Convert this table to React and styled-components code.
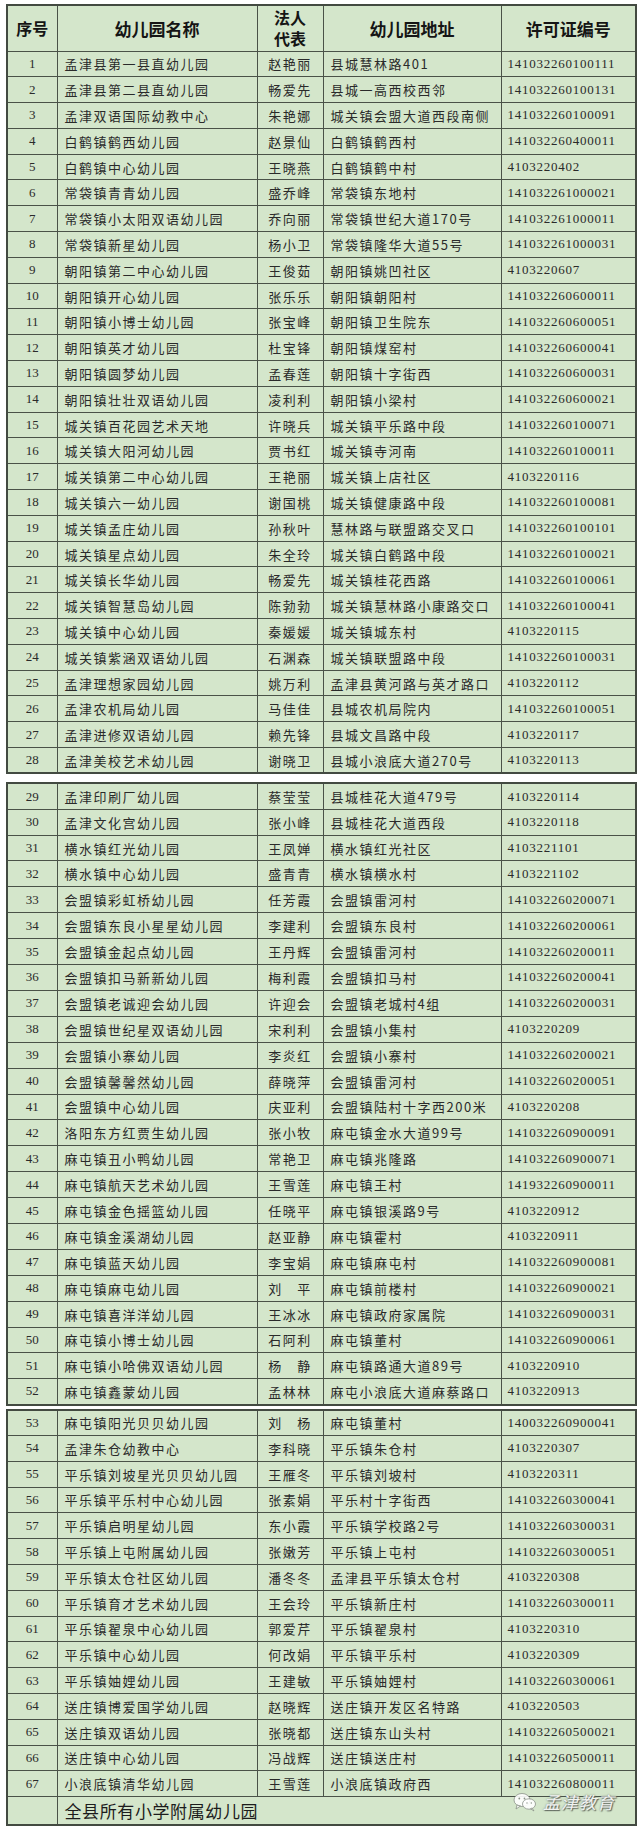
import React from 'react';
import styled, { createGlobalStyle } from 'styled-components';

const GlobalStyle = createGlobalStyle`
  body {
    margin: 0;
    background: #ffffff;
    font-family: "Noto Sans CJK SC", "Noto Sans", sans-serif;
  }
`;

const Page = styled.div`
  width: 640px;
  box-sizing: border-box;
  padding: 4px 5px 2px 6px;
`;

const Block = styled.div`
  position: relative;
  margin-top: ${p => p.$gap}px;
`;

const Table = styled.table`
  width: 100%;
  border-collapse: collapse;
  table-layout: fixed;
  background: #d4e6cb;
  border: 2px solid #434a41;
`;

const HeadCell = styled.th`
  border: 1.5px solid #4a5248;
  padding: 0;
  font-size: ${p => (p.$small ? 16 : 17)}px;
  font-weight: 700;
  line-height: 21px;
  color: #151515;
  text-align: center;
`;

const Row = styled.tr`
  height: ${p => p.$h}px;
`;

const Cell = styled.td`
  border: 1.5px solid #4a5248;
  padding: 0 0 0 ${p => (p.$center ? 0 : 7)}px;
  text-align: ${p => (p.$center ? 'center' : 'left')};
  font-size: 13px;
  letter-spacing: 1.5px;
  color: #2a2a2a;
  white-space: nowrap;
  overflow: hidden;
`;

const NumCell = styled(Cell)`
  font-family: "Liberation Serif", serif;
  font-size: 13px;
  letter-spacing: ${p => (p.$center ? 0 : 0.75)}px;
  padding-left: ${p => (p.$center ? 0 : 6)}px;
`;

const FootCell = styled.td`
  border: 1.5px solid #4a5248;
  padding-left: 7px;
  font-size: 17px;
  letter-spacing: 0.6px;
  color: #1c1c1c;
`;

const Watermark = styled.div`
  position: absolute;
  right: 20px;
  bottom: 12px;
  display: flex;
  align-items: center;
  gap: 6px;
  color: rgba(255, 255, 255, 0.92);
  font-size: 17px;
  letter-spacing: 1px;
  font-style: italic;
  text-shadow: 0 0 2px #6e766c, 1px 1px 1px #5d655b;
  pointer-events: none;
`;

const COLS = [50, 200, 66, 178, 135];

const DATA = `孟津县第一县直幼儿园|赵艳丽|县城慧林路401|141032260100111
孟津县第二县直幼儿园|畅爱先|县城一高西校西邻|141032260100131
孟津双语国际幼教中心|朱艳娜|城关镇会盟大道西段南侧|141032260100091
白鹤镇鹤西幼儿园|赵景仙|白鹤镇鹤西村|141032260400011
白鹤镇中心幼儿园|王晓燕|白鹤镇鹤中村|4103220402
常袋镇青青幼儿园|盛乔峰|常袋镇东地村|141032261000021
常袋镇小太阳双语幼儿园|乔向丽|常袋镇世纪大道170号|141032261000011
常袋镇新星幼儿园|杨小卫|常袋镇隆华大道55号|141032261000031
朝阳镇第二中心幼儿园|王俊茹|朝阳镇姚凹社区|4103220607
朝阳镇开心幼儿园|张乐乐|朝阳镇朝阳村|141032260600011
朝阳镇小博士幼儿园|张宝峰|朝阳镇卫生院东|141032260600051
朝阳镇英才幼儿园|杜宝锋|朝阳镇煤窑村|141032260600041
朝阳镇圆梦幼儿园|孟春莲|朝阳镇十字街西|141032260600031
朝阳镇壮壮双语幼儿园|凌利利|朝阳镇小梁村|141032260600021
城关镇百花园艺术天地|许晓兵|城关镇平乐路中段|141032260100071
城关镇大阳河幼儿园|贾书红|城关镇寺河南|141032260100011
城关镇第二中心幼儿园|王艳丽|城关镇上店社区|4103220116
城关镇六一幼儿园|谢国桃|城关镇健康路中段|141032260100081
城关镇孟庄幼儿园|孙秋叶|慧林路与联盟路交叉口|141032260100101
城关镇星点幼儿园|朱全玲|城关镇白鹤路中段|141032260100021
城关镇长华幼儿园|畅爱先|城关镇桂花西路|141032260100061
城关镇智慧岛幼儿园|陈勃勃|城关镇慧林路小康路交口|141032260100041
城关镇中心幼儿园|秦媛媛|城关镇城东村|4103220115
城关镇紫涵双语幼儿园|石渊森|城关镇联盟路中段|141032260100031
孟津理想家园幼儿园|姚万利|孟津县黄河路与英才路口|4103220112
孟津农机局幼儿园|马佳佳|县城农机局院内|141032260100051
孟津进修双语幼儿园|赖先锋|县城文昌路中段|4103220117
孟津美校艺术幼儿园|谢晓卫|县城小浪底大道270号|4103220113
孟津印刷厂幼儿园|蔡莹莹|县城桂花大道479号|4103220114
孟津文化宫幼儿园|张小峰|县城桂花大道西段|4103220118
横水镇红光幼儿园|王凤婵|横水镇红光社区|4103221101
横水镇中心幼儿园|盛青青|横水镇横水村|4103221102
会盟镇彩虹桥幼儿园|任芳霞|会盟镇雷河村|141032260200071
会盟镇东良小星星幼儿园|李建利|会盟镇东良村|141032260200061
会盟镇金起点幼儿园|王丹辉|会盟镇雷河村|141032260200011
会盟镇扣马新新幼儿园|梅利霞|会盟镇扣马村|141032260200041
会盟镇老诚迎会幼儿园|许迎会|会盟镇老城村4组|141032260200031
会盟镇世纪星双语幼儿园|宋利利|会盟镇小集村|4103220209
会盟镇小寨幼儿园|李炎红|会盟镇小寨村|141032260200021
会盟镇馨馨然幼儿园|薛晓萍|会盟镇雷河村|141032260200051
会盟镇中心幼儿园|庆亚利|会盟镇陆村十字西200米|4103220208
洛阳东方红贾生幼儿园|张小牧|麻屯镇金水大道99号|141032260900091
麻屯镇丑小鸭幼儿园|常艳卫|麻屯镇兆隆路|141032260900071
麻屯镇航天艺术幼儿园|王雪莲|麻屯镇王村|141932260900011
麻屯镇金色摇篮幼儿园|任晓平|麻屯镇银溪路9号|4103220912
麻屯镇金溪湖幼儿园|赵亚静|麻屯镇霍村|4103220911
麻屯镇蓝天幼儿园|李宝娟|麻屯镇麻屯村|141032260900081
麻屯镇麻屯幼儿园|刘　平|麻屯镇前楼村|141032260900021
麻屯镇喜洋洋幼儿园|王冰冰|麻屯镇政府家属院|141032260900031
麻屯镇小博士幼儿园|石阿利|麻屯镇董村|141032260900061
麻屯镇小哈佛双语幼儿园|杨　静|麻屯镇路通大道89号|4103220910
麻屯镇鑫蒙幼儿园|孟林林|麻屯小浪底大道麻蔡路口|4103220913
麻屯镇阳光贝贝幼儿园|刘　杨|麻屯镇董村|140032260900041
孟津朱仓幼教中心|李科晓|平乐镇朱仓村|4103220307
平乐镇刘坡星光贝贝幼儿园|王雁冬|平乐镇刘坡村|4103220311
平乐镇平乐村中心幼儿园|张素娟|平乐村十字街西|141032260300041
平乐镇启明星幼儿园|东小霞|平乐镇学校路2号|141032260300031
平乐镇上屯附属幼儿园|张嫩芳|平乐镇上屯村|141032260300051
平乐镇太仓社区幼儿园|潘冬冬|孟津县平乐镇太仓村|4103220308
平乐镇育才艺术幼儿园|王会玲|平乐镇新庄村|141032260300011
平乐镇翟泉中心幼儿园|郭爱芹|平乐镇翟泉村|4103220310
平乐镇中心幼儿园|何改娟|平乐镇平乐村|4103220309
平乐镇妯娌幼儿园|王建敏|平乐镇妯娌村|141032260300061
送庄镇博爱国学幼儿园|赵晓辉|送庄镇开发区名特路|4103220503
送庄镇双语幼儿园|张晓都|送庄镇东山头村|141032260500021
送庄镇中心幼儿园|冯战辉|送庄镇送庄村|141032260500011
小浪底镇清华幼儿园|王雪莲|小浪底镇政府西|141032260800011`
  .split('\n')
  .map((line, i) => [String(i + 1), ...line.split('|')]);

const WeChatIcon = () => (
  <svg width="24" height="20" viewBox="0 0 24 20">
    <g fill="rgba(255,255,255,0.9)" stroke="#8a9288" strokeWidth="0.8">
      <ellipse cx="9" cy="8" rx="8" ry="6.5" />
      <path d="M4 13 L3 17 L7.5 14 Z" />
      <ellipse cx="16" cy="12" rx="6.5" ry="5.2" />
      <path d="M19 16 L21 19 L17.5 16.8 Z" />
    </g>
    <g fill="#8a9288">
      <circle cx="6.3" cy="6.5" r="0.9" />
      <circle cx="11.5" cy="6.5" r="0.9" />
      <circle cx="14" cy="11" r="0.7" />
      <circle cx="18.3" cy="11" r="0.7" />
    </g>
  </svg>
);

const Cols = () => (
  <colgroup>
    {COLS.map((w, i) => (
      <col key={i} style={{ width: w }} />
    ))}
  </colgroup>
);

const DataRow = ({ row, h }) => (
  <Row $h={h}>
    <NumCell $center>{row[0]}</NumCell>
    <Cell>{row[1]}</Cell>
    <Cell $center>{row[2]}</Cell>
    <Cell>{row[3]}</Cell>
    <NumCell>{row[4]}</NumCell>
  </Row>
);

export default function App() {
  return (
    <Page>
      <GlobalStyle />
      <Block $gap={0}>
        <Table>
          <Cols />
          <thead>
            <Row $h={46}>
              <HeadCell $small>序号</HeadCell>
              <HeadCell>幼儿园名称</HeadCell>
              <HeadCell $small>
                法人
                <br />
                代表
              </HeadCell>
              <HeadCell>幼儿园地址</HeadCell>
              <HeadCell>许可证编号</HeadCell>
            </Row>
          </thead>
          <tbody>
            {DATA.slice(0, 28).map(r => (
              <DataRow key={r[0]} row={r} h={25.8} />
            ))}
          </tbody>
        </Table>
      </Block>
      <Block $gap={8}>
        <Table>
          <Cols />
          <tbody>
            {DATA.slice(28, 52).map(r => (
              <DataRow key={r[0]} row={r} h={25.9} />
            ))}
          </tbody>
        </Table>
      </Block>
      <Block $gap={3}>
        <Table>
          <Cols />
          <tbody>
            {DATA.slice(52).map(r => (
              <DataRow key={r[0]} row={r} h={25.8} />
            ))}
            <Row $h={26}>
              <Cell />
              <FootCell colSpan={4}>全县所有小学附属幼儿园</FootCell>
            </Row>
          </tbody>
        </Table>
        <Watermark>
          <WeChatIcon />
          孟津教育
        </Watermark>
      </Block>
    </Page>
  );
}
